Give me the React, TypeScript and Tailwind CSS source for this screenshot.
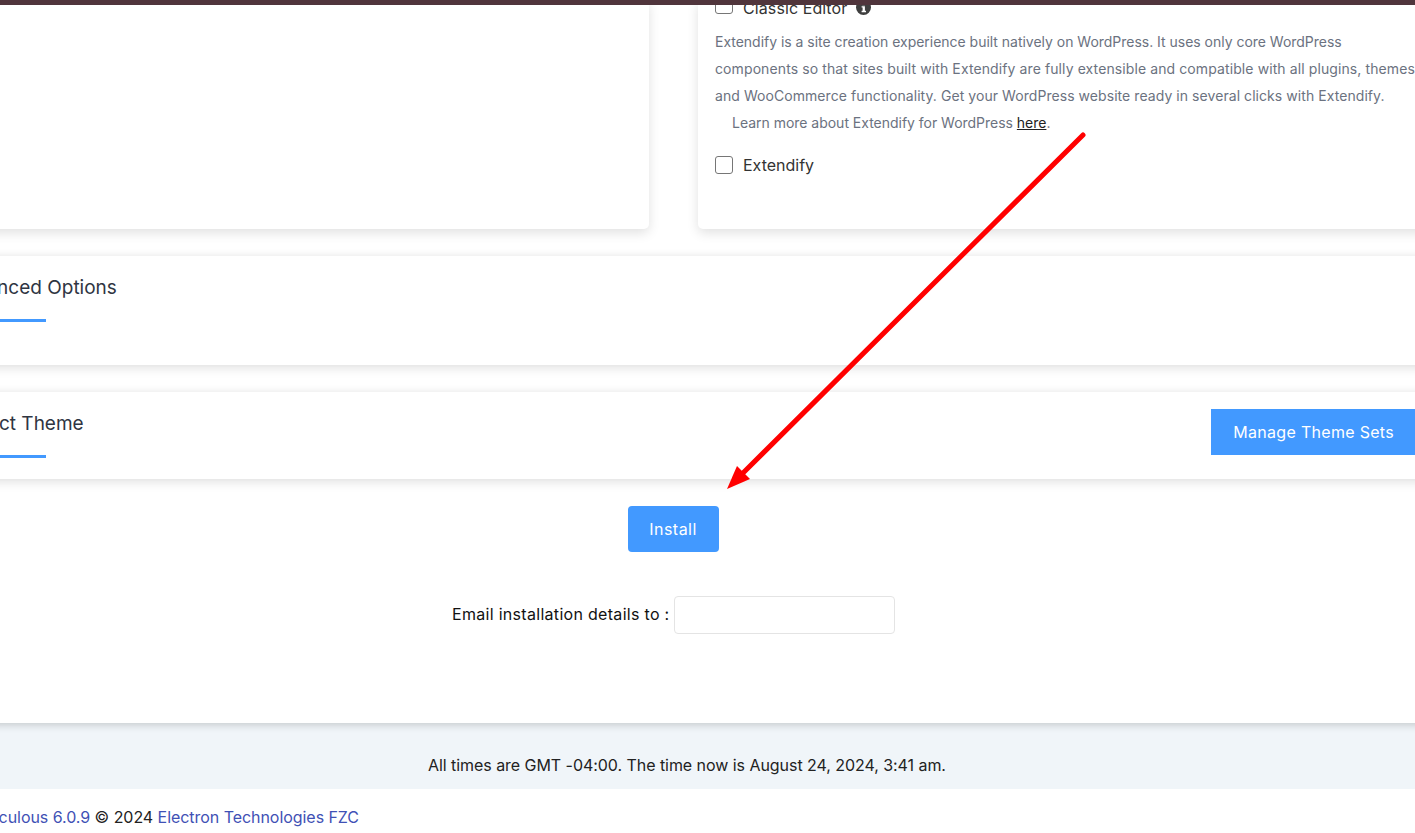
const FONT = "font-['Inter','Liberation_Sans',sans-serif]";

const InfoIcon = () => (
    <svg width="15" height="15" viewBox="0 0 15 15" className="ml-[9px] shrink-0">
        <circle cx="7.5" cy="7.5" r="7.5" fill="#3f3f3f" />
        <rect x="6.3" y="2.8" width="2.6" height="2.4" fill="#fff" />
        <path d="M5.6 6.2h3.3v4.6h1.1v1.4H5.6v-1.4h1V7.6h-1z" fill="#fff" />
    </svg>
);

const Checkbox = ({ className = "" }: { className?: string }) => (
    <span className={`w-[18px] h-[18px] shrink-0 rounded-[3px] border border-[#767676] bg-white ${className}`} />
);

const SectionRow = ({ title, titleClass, h, mt, right }: { title: string; titleClass: string; h: string; mt: string; right?: React.ReactNode }) => (
    <div className={`${h} ${mt} bg-white shadow-[0_3px_10px_rgba(0,0,0,0.12),0_-2px_6px_rgba(0,0,0,0.03)] pl-[96px] pr-[184px] pt-[19px] flex justify-between items-start`}>
        <div>
            <div className={`${titleClass} pt-[1px] h-[24px] text-[19px] leading-[24px] text-[#2f3542] whitespace-nowrap`}>{title}</div>
            <div className="w-[50px] h-[2.5px] bg-[#4299ff] mt-[20px]" />
        </div>
        {right}
    </div>
);

export default function App() {
    return (
        <div className={`relative w-[1415px] h-[833px] overflow-hidden bg-white ${FONT}`}>
            {/* Top bar stays over the scrolled page */}
            <div className="absolute top-0 left-0 right-0 h-[5px] bg-[#50353c] z-20" />

            <div className="-ml-[100px] w-[1700px]">
                <div className="h-[723px] bg-white shadow-[0_2px_8px_rgba(0,0,0,0.18)] relative z-10">
                    <div className="flex gap-[49px] h-[229px]">
                        <div className="w-[749px] bg-white rounded-b-[5px] shadow-[0_4px_12px_rgba(0,0,0,0.12)]" />
                        <div className="w-[800px] bg-white rounded-b-[5px] shadow-[0_4px_12px_rgba(0,0,0,0.12)] pl-[17px]">
                            <div className="flex items-center h-[15px] text-[16px] tracking-[0.1px] text-[#333]">
                                <Checkbox className="-mt-[5px]" />
                                <span className="ml-[10px] whitespace-nowrap">Classic Editor</span>
                                <InfoIcon />
                            </div>
                            <div className="mt-[13px] text-[14px] leading-[27px] text-[#6b7280] whitespace-nowrap">
                                <div className="-tracking-[0.02px]">Extendify is a site creation experience built natively on WordPress. It uses only core WordPress</div>
                                <div className="tracking-[0.1px]">components so that sites built with Extendify are fully extensible and compatible with all plugins, themes</div>
                                <div className="tracking-[0.06px]">and WooCommerce functionality. Get your WordPress website ready in several clicks with Extendify.</div>
                                <div className="pl-[17px] -tracking-[0.02px]">
                                    Learn more about Extendify for WordPress{" "}
                                    <a className="underline text-[#222]">here</a>.
                                </div>
                            </div>
                            <div className="flex items-center mt-[17px] text-[16px] text-[#333]">
                                <Checkbox />
                                <span className="ml-[10px]">Extendify</span>
                            </div>
                        </div>
                    </div>

                    <SectionRow title="Advanced Options" titleClass="-ml-[45px]" h="h-[109px]" mt="mt-[27px]" />
                    <SectionRow
                        title="Select Theme"
                        titleClass="-ml-[36px]"
                        h="h-[87px]"
                        mt="mt-[27px]"
                        right={
                            <button className="h-[46px] -mt-[2px] px-[22px] pb-[1px] bg-[#4299ff] text-white text-[16px] tracking-[0.3px] whitespace-nowrap">
                                Manage Theme Sets
                            </button>
                        }
                    />

                    <div className="w-[1546px] flex flex-col items-center">
                        <button className="mt-[27px] w-[91px] h-[46px] rounded-[4px] bg-[#4299ff] text-white text-[16px] tracking-[0.5px]">
                            Install
                        </button>
                        <div className="mt-[44px] flex items-center text-[16px] tracking-[0.3px] text-[#111] self-start ml-[552px]">
                            <span className="whitespace-nowrap w-[218px] pb-[2px]">Email installation details to :</span>
                            <input className="ml-[4px] w-[221px] h-[38px] rounded-[4px] border border-[#e4e4e4] bg-white" />
                        </div>
                    </div>
                </div>

                <div className="h-[66px] bg-[#f0f5f9] pt-[32px] pl-[528px] text-[16px] tracking-[-0.05px] leading-[20px] text-[#222] whitespace-nowrap">
                    All times are GMT -04:00. The time now is August 24, 2024, 3:41 am.
                </div>
                <div className="pt-[18px] text-[16px] tracking-[-0.05px] leading-[20px] text-[#222] whitespace-nowrap flex justify-end w-[459px]">
                    <span>
                        <a className="text-[#3f51b5]">Softaculous 6.0.9</a> © 2024{" "}
                        <a className="text-[#3f51b5]">Electron Technologies FZC</a>
                    </span>
                </div>
            </div>

            {/* Annotation arrow */}
            <svg className="absolute inset-0 z-30 pointer-events-none" width="1415" height="833">
                <line x1="1083" y1="135" x2="742" y2="474" stroke="#ff0000" strokeWidth="5" strokeLinecap="round" />
                <polygon points="727,489 737,466 750,479" fill="#ff0000" />
            </svg>
        </div>
    );
}
